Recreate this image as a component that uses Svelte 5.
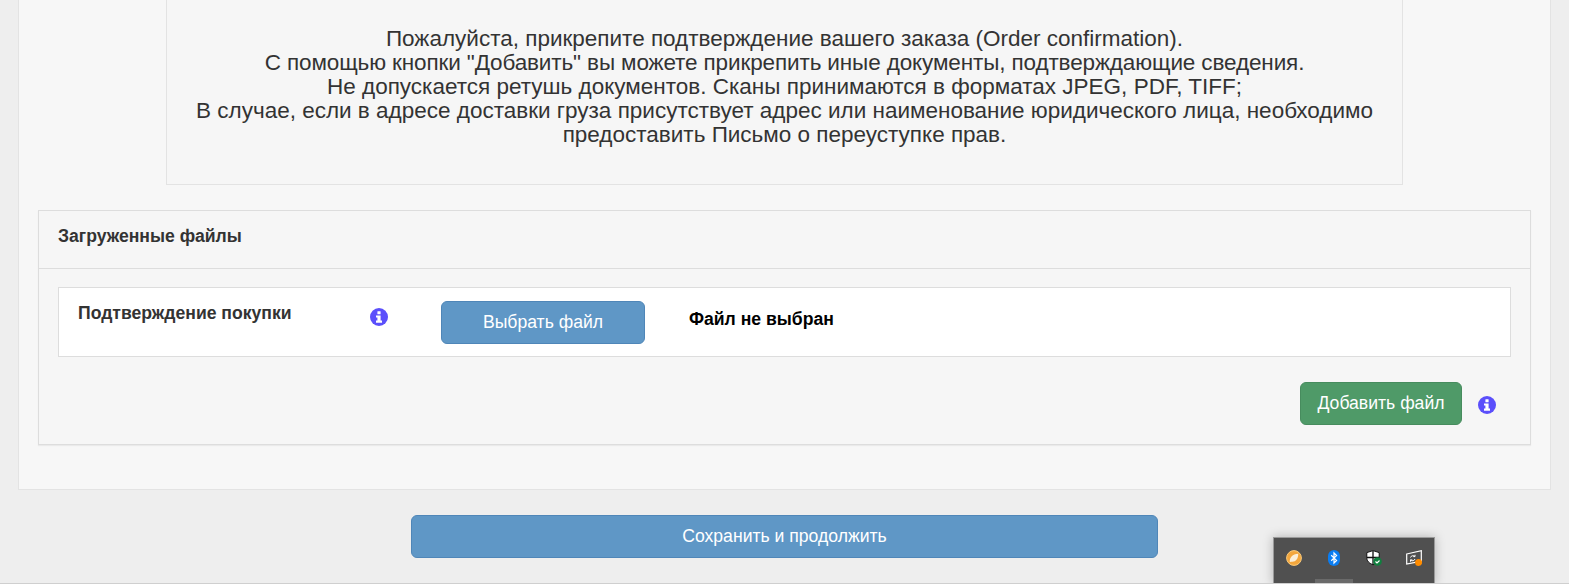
<script>
  const lines = [
    'Пожалуйста, прикрепите подтверждение вашего заказа (Order confirmation).',
    'С помощью кнопки "Добавить" вы можете прикрепить иные документы, подтверждающие сведения.',
    'Не допускается ретушь документов. Сканы принимаются в форматах JPEG, PDF, TIFF;',
    'В случае, если в адресе доставки груза присутствует адрес или наименование юридического лица, необходимо предоставить Письмо о переуступке прав.'
  ];
</script>

{#snippet info()}
  <svg class="info" viewBox="0 0 18 18" aria-hidden="true">
    <circle cx="9" cy="9" r="9" fill="#5b4ffb" />
    <rect x="7.4" y="3.2" width="3.2" height="3" rx="0.5" fill="#fff" />
    <path d="M6 7.400h4.600v5.200H12v2.200H6v-2.200h1.400V9.400H6z" fill="#fff" />
  </svg>
{/snippet}

<div class="page">
  <section class="card">
    <div class="well">
      {#each lines as line}<p>{line}</p>{/each}
    </div>

    <div class="panel">
      <h3 class="panel-head">Загруженные файлы</h3>
      <div class="panel-body">
        <div class="file-row">
          <div class="label">Подтверждение покупки</div>
          <div class="info-cell">{@render info()}</div>
          <button class="btn blue pick">Выбрать файл</button>
          <span class="nofile">Файл не выбран</span>
        </div>
        <div class="actions">
          <button class="btn green">Добавить файл</button>
          <span class="action-info">{@render info()}</span>
        </div>
      </div>
    </div>
  </section>

  <div class="save-wrap">
    <button class="btn blue save">Сохранить и продолжить</button>
  </div>

  <div class="tray">
    <svg class="t" viewBox="0 0 16 16"><circle cx="8" cy="8" r="7.4" fill="#f3a63c" stroke="#f9cb7d" /><path d="M3.800 12C3.500 7.500 6.500 4 12.200 3.800c.2 5.200-2.800 8.400-6.800 7.900z" fill="#fbeed8" /></svg>
    <svg class="t" viewBox="0 0 12 16"><rect x="0" y="0" width="12" height="16" rx="6" fill="#0a7df2" /><path d="M3.200 5.200 8.600 10.400 6 13V3l2.600 2.600-5.400 5.200" fill="none" stroke="#fff" stroke-width="1.200" /></svg>
    <svg class="t" viewBox="0 0 16 16"><path d="M7 .6 13.200 2.600V8c0 3.200-2.800 5.400-6.200 6.800C3.600 13.400.8 11.200.8 8V2.600z" fill="#fff" stroke="#111" /><path d="M7 1v13M1 7.500h12" stroke="#111" stroke-width="1.300" /><circle cx="11.500" cy="11.500" r="4.300" fill="#10803f" /><path d="m9.500 11.500 1.500 1.500 2.500-2.500" fill="none" stroke="#fff" stroke-width="1.100" /></svg>
    <svg class="t" viewBox="0 0 16 16"><path d="M.7 4 15.300.7v10.500L.7 14z" fill="none" stroke="#fff" stroke-width="1.200" /><path d="M4.500 7.500c.5-1.800 3-2.500 4.500-1M9 4.800v1.800H7.200M9 9c-.5 1.800-3 2.500-4.500 1M4.500 11.700V9.900h1.800" fill="none" stroke="#fff" stroke-width="1" /><circle cx="12.600" cy="12.400" r="3.500" fill="#ff8c00" /></svg>
    <span class="grip"></span>
  </div>
</div>

<style>
  :global(body) {
    margin: 0;
    background: #eee;
  }
  .page {
    position: relative;
    height: 584px;
    box-sizing: border-box;
    overflow: hidden;
    padding: 0 18px;
    border-bottom: 1px solid #cfcfcf;
    font-family: "Liberation Sans", Arial, sans-serif;
    color: #333;
  }
  .card {
    box-sizing: border-box;
    height: 490px;
    padding: 0 19px;
    background: #f7f7f7;
    border: 1px solid #e3e3e3;
    border-top: 0;
  }
  .well {
    box-sizing: border-box;
    width: 1237px;
    height: 185px;
    margin: 0 auto 25px;
    padding: 27px 19px 0;
    background: #f6f6f6;
    border: 1px solid #e3e3e3;
    border-top: 0;
    text-align: center;
    font-size: 22.5px;
    line-height: 24px;
  }
  .well p {
    margin: 0;
  }
  .well p:nth-child(2) {
    letter-spacing: -0.124px;
  }
  .panel {
    box-sizing: border-box;
    height: 235px;
    background: #f6f6f6;
    border: 1px solid #ddd;
    box-shadow: 0 1px 1px rgba(0, 0, 0, 0.05);
  }
  .panel-head {
    box-sizing: border-box;
    height: 58px;
    margin: 0;
    padding: 16px 19px 0;
    border-bottom: 1px solid #ddd;
    font-size: 17.6px;
    line-height: 19px;
    font-weight: 700;
  }
  .panel-body {
    padding: 18px 19px 0;
  }
  .file-row {
    box-sizing: border-box;
    height: 70px;
    display: flex;
    align-items: flex-start;
    background: #fff;
    border: 1px solid #ddd;
  }
  .label {
    width: 311px;
    padding: 16px 0 0 19px;
    box-sizing: border-box;
    font-size: 17.6px;
    line-height: 19px;
    font-weight: 700;
  }
  .info-cell {
    width: 71px;
    padding-top: 20px;
  }
  .info {
    display: block;
    width: 18px;
    height: 18px;
    flex: none;
  }
  .btn {
    box-sizing: border-box;
    color: #fff;
    font-family: inherit;
    font-size: 17.6px;
    line-height: 20px;
    border-radius: 6px;
    border: 1px solid;
    padding: 0 0 2px;
  }
  .blue {
    background: #5f97c6;
    border-color: #4f86b8;
  }
  .green {
    width: 162px;
    height: 43px;
    background: #4f9a68;
    border-color: #478c5e;
  }
  .pick {
    width: 204px;
    height: 43px;
    margin-top: 13px;
  }
  .nofile {
    margin: 21px 0 0 44px;
    font-size: 17.6px;
    line-height: 20px;
    font-weight: 700;
    color: #000;
  }
  .actions {
    display: flex;
    align-items: center;
    justify-content: flex-end;
    gap: 16px;
    margin-top: 25px;
    padding-right: 15px;
  }
  .action-info {
    padding-top: 2px;
  }
  .save-wrap {
    display: flex;
    justify-content: center;
    margin-top: 25px;
  }
  .save {
    width: 747px;
    height: 43px;
  }
  .tray {
    position: absolute;
    left: 1273px;
    top: 537px;
    width: 162px;
    height: 47px;
    box-sizing: border-box;
    background: #505050;
    border: 1px solid #9a9a9a;
    border-bottom: 0;
    box-shadow: 0 0 10px rgba(0, 0, 0, 0.25);
  }
  .t {
    position: absolute;
    top: 12px;
    width: 16px;
    height: 16px;
  }
  .t:nth-child(1) { left: 12px; }
  .t:nth-child(2) { left: 54px; width: 12px; }
  .t:nth-child(3) { left: 92px; }
  .t:nth-child(4) { left: 132px; }
  .grip {
    position: absolute;
    left: 41px;
    bottom: 0;
    width: 38px;
    height: 5px;
    background: #6a6a6a;
  }
</style>
